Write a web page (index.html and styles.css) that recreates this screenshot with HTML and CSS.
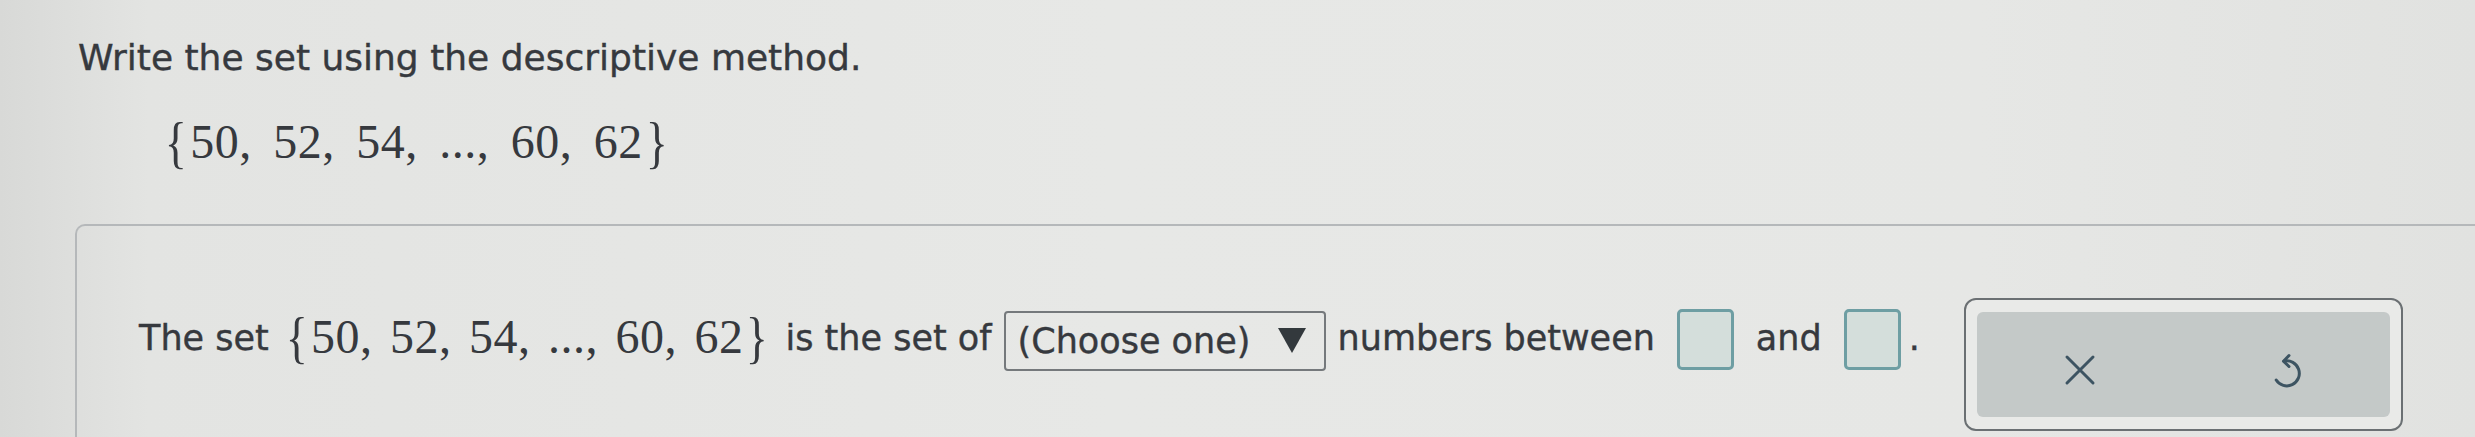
FILE: index.html
```html
<!DOCTYPE html>
<html lang="en">
  <head>
    <meta charset="UTF-8">
    <title>Write the set using the descriptive method</title>
    <link rel="stylesheet" href="styles.css">
  </head>
  <body>
    <div class="question">
      <p class="prompt">Write the set using the descriptive method.</p>
      <p class="math set-line"><span class="brace">{</span>50, 52, 54, ..., 60, 62<span class="brace">}</span></p>
    </div>
    <div class="panel">
      <div class="answer-line">
        <span>The set</span>
        <span class="math inline-set"><span class="brace">{</span>50, 52, 54, ..., 60, 62<span class="brace">}</span></span>
        <span>is the set of</span>
        <div class="select">
          <span>(Choose one)</span>
          <span class="caret"></span>
        </div>
        <span>numbers between</span>
        <span class="answer-box"></span>
        <span>and</span>
        <span class="answer-box"></span>
        <span class="dot">.</span>
      </div>
      <div class="tools">
        <div class="tools-inner">
          <button class="tool-btn" aria-label="Clear">
            <svg width="34" height="34" viewBox="0 0 34 34">
              <path d="M4 4 L30 30 M30 4 L4 30" stroke="#3d5462" stroke-width="3" fill="none" stroke-linecap="round"/>
            </svg>
          </button>
          <button class="tool-btn" aria-label="Undo">
            <svg width="36" height="42" viewBox="0 0 36 42">
              <path d="M15 12.2 A12.5 12.5 0 1 1 7.2 31" stroke="#3d5462" stroke-width="3" fill="none" stroke-linecap="round"/>
              <path d="M20 6.5 L14.5 12.2 L20 17.5" stroke="#3d5462" stroke-width="3" fill="none" stroke-linecap="round" stroke-linejoin="round"/>
            </svg>
          </button>
        </div>
      </div>
    </div>
  </body>
</html>
```

FILE: styles.css
```css
body {
  margin: 0;
  height: 437px;
  overflow: hidden;
  font-family: 'DejaVu Sans', Verdana, sans-serif;
  color: #36393e;
  background: linear-gradient(to right, #d8d9d7 0%, #e3e4e2 6%, #e7e8e6 45%, #e6e7e5 80%, #e1e2e0 100%);
}

.question {
  padding: 36px 0 0 78px;
}

.prompt {
  margin: 0;
  font-size: 36px;
  line-height: 44px;
  -webkit-text-stroke: 0.4px #36393e;
}

.math {
  font-family: 'Liberation Serif', 'Times New Roman', serif;
  letter-spacing: 0.5px;
  word-spacing: 9px;
}

.set-line {
  margin: 34px 0 0 84px;
  font-size: 48px;
  line-height: 50px;
}

.brace {
  display: inline-block;
  font-size: 1.2em;
  line-height: 1;
  transform: scaleX(0.8);
  vertical-align: -4px;
}

.panel {
  margin: 52px 0 0 75px;
  height: 300px;
  border: 2px solid #b5b8ba;
  border-right: none;
  border-bottom: none;
  border-radius: 10px 0 0 0;
  padding: 72px 0 0 62px;
  display: flex;
  align-items: flex-start;
}

.answer-line {
  display: flex;
  align-items: center;
  gap: 12px;
  height: 64px;
  margin-top: 8px;
  font-size: 35px;
  -webkit-text-stroke: 0.4px #36393e;
}

.inline-set {
  font-size: 48px;
  word-spacing: 5px;
  margin: 0 2px;
  -webkit-text-stroke: 0;
}

.select {
  display: flex;
  align-items: center;
  justify-content: space-between;
  box-sizing: border-box;
  width: 322px;
  height: 60px;
  padding: 0 18px 0 12px;
  border: 2px solid #75797c;
  border-radius: 4px;
  margin-top: 6px;
}

.caret {
  width: 0;
  height: 0;
  border-left: 14px solid transparent;
  border-right: 14px solid transparent;
  border-top: 25px solid #33393d;
}

.answer-box {
  box-sizing: border-box;
  width: 57px;
  height: 61px;
  border: 3px solid #6e9ea3;
  border-radius: 5px;
  background: #d4dedb;
  margin: 4px 10px 0;
}

.dot {
  margin-left: -14px;
}

.tools {
  margin-left: 44px;
  box-sizing: border-box;
  width: 439px;
  height: 133px;
  border: 2px solid #6b7073;
  border-radius: 12px;
  padding: 12px 11px;
  background: #e9eae8;
}

.tools-inner {
  display: flex;
  height: 100%;
  background: #c4c9c8;
  border-radius: 6px;
}

.tool-btn {
  flex: 1;
  display: flex;
  align-items: center;
  justify-content: center;
  border: none;
  background: none;
  padding: 0;
  padding-top: 12px;
}
```
